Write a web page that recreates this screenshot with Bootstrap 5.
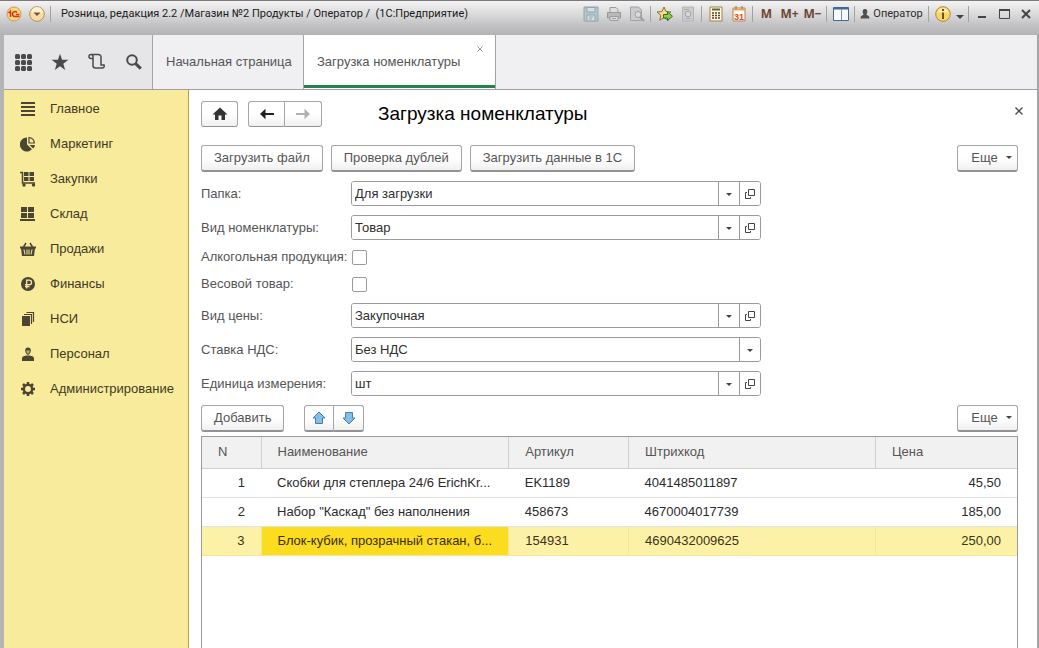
<!DOCTYPE html>
<html lang="ru">
<head>
<meta charset="utf-8">
<meta name="viewport" content="width=device-width, initial-scale=1">
<title>Загрузка номенклатуры</title>
<link href="https://cdn.jsdelivr.net/npm/bootstrap@5.3.0/dist/css/bootstrap.min.css" rel="stylesheet">
<style>
  body { font: 13px/16px "Liberation Sans", Arial, sans-serif; color: #333; background: #fff; }
  button { font: inherit; color: inherit; }
  svg { display: block; flex: none; }
  .app-frame { border-left: 4px solid #b4b4b4; border-right: 2px solid #a4a4a4; }

  /* window caption */
  .caption-bar { height: 35px; margin-left: -4px; margin-right: -2px; padding: 0 2px 8px; border-top: 1px solid #7c787b;
    background: linear-gradient(#f3f3f3, #d6d6d7 45%, #c3c3c5 70%, #b3b3b5); }
  .caption-text { font: 11px/16px Roboto, "Liberation Sans", sans-serif; color: #1a1a1a; }
  .cap-btn { width: 23px; height: 24px; padding: 0; border: 0; background: none; display: flex; align-items: center; justify-content: center; }
  .cap-sm { width: 22px; }
  .cap-arrow { width: 12px; }
  .cap-user { width: 69px; gap: 3px; font: 11px/16px Roboto, "Liberation Sans", sans-serif; color: #2c2c2c; }
  .cap-mem { font: bold 12px/16px "Open Sans", "Liberation Sans", sans-serif; color: #6d4534; }
  .cap-sep { width: 1px; height: 16px; margin: 0 2px; background: #a2a2a4; }

  /* section tabs */
  .tab-strip { background: #f0f0f2; border-bottom: 1px solid #a09ea0; height: 55px; }
  .tool-zone { width: 149px; background: #e6e6e8; border-right: 1px solid #a3a3a5; padding-left: 9px; gap: 17px; }
  .icon-btn { width: 20px; height: 20px; padding: 0; border: 0; background: none; color: #4a4a4a; display: flex; align-items: center; justify-content: center; }
  .page-tab { padding: 0 13px; color: #555; text-decoration: none; position: relative; display: flex; align-items: center; border-right: 1px solid #a3a3a5; white-space: nowrap; }
  .tab-start { width: 151px; }
  .tab-open { width: 192px; background: #fff; box-shadow: inset 0 -1px #fff, inset 0 -4px #238350, inset 1px 0 #fff, inset -1px 0 #fff; }
  .tab-close { position: absolute; right: 9px; top: 8px; width: 12px; height: 12px; padding: 0; border: 0; background: none; color: #999; display: flex; align-items: center; justify-content: center; }

  /* sections panel */
  .side-panel { width: 185px; flex: none; background: #f9eb9c; border-right: 1px solid #b3a44c; min-height: calc(100vh - 90px); padding-top: 1px; }
  .side-link { display: flex; align-items: center; height: 35px; padding-left: 16px; gap: 14px; color: #403a25; text-decoration: none; }
  .side-link svg { color: #4b4534; }

  /* form */
  .work-area { padding: 11px 8px 0 12px; background: #fff; }
  .form-body { padding-right: 11px; }
  .cmd-row { margin: 18px 0 9px; }
  .btn-form { height: 27px; border: 1px solid #a6a6a8; border-bottom: 2px solid #929294; border-radius: 3px; background: linear-gradient(#fff 50%, #f0f0f0); color: #555; line-height: 16px; padding: 0 12px; display: inline-flex; align-items: center; justify-content: center; }
  .btn-nav { height: 26px; width: 37px; padding: 0; border-bottom-width: 1px; }
  .nav-pair { margin-left: 10px; }
  .btn-move { width: 30px; padding: 0; }
  .btn-more { width: 61px; gap: 8px; padding: 0 0 0 8px; }
  .form-title { font-size: 19px; line-height: 24px; color: #000; font-weight: 400; }
  .field-set { max-width: 560px; }
  .field-row { display: flex; align-items: center; margin-bottom: 9px; }
  .check-row { margin-bottom: 11px; }
  .field-row label { width: 150px; flex: none; color: #555; white-space: nowrap; }
  .pick-box { border: 1px solid #9b9b9d; border-radius: 3px; height: 25px; display: flex; flex: 1; overflow: hidden; background: #fff; }
  .pick-box .form-select { border: 0; border-radius: 0; padding: 0 24px 0 3px; height: 23px; min-width: 0; font-size: 13px; line-height: 16px; color: #2f2f2f; background-position: right 0 center; background-size: 21px 23px;
    background-image: url("data:image/svg+xml,%3Csvg xmlns='http://www.w3.org/2000/svg' width='21' height='23'%3E%3Cpath d='M.5 0v23' stroke='%239b9b9d'/%3E%3Cpath d='M8 11h6l-3 3z' fill='%23444'/%3E%3C/svg%3E"); }
  .open-btn { width: 21px; flex: none; padding: 0; border: 0; border-left: 1px solid #9b9b9d; background: #fff; color: #444; display: flex; align-items: center; justify-content: center; }
  .check-row .form-check-input { width: 15px; height: 15px; margin: 0 0 0 1px; border: 1px solid #9b9b9d; border-radius: 2px; }

  /* item list */
  .list-frame { border: 1px solid #9b9b9d; border-bottom: 0; min-height: calc(100vh - 436px); }
  .goods { width: 100%; table-layout: fixed; border-collapse: collapse; }
  .goods th { height: 31px; padding: 0 16px; font-weight: 400; color: #555; background: #f1f1f1; border-bottom: 1px solid #cfcfcf; border-left: 1px solid #cfcfcf; }
  .goods td { height: 29px; padding: 0 16px; color: #2b2b2b; border-bottom: 1px solid #e2e2e2; white-space: nowrap; overflow: hidden; }
  .goods th:first-child, .goods .picked td:first-child { border-left: 0; }
  .goods .picked td { background: #fdf1a8; border-bottom-color: #f5e79a; border-left: 1px solid #f6e697; color: #3b3311; }
  .goods .picked td.cell-on { background: #fbdc1e; color: #3b2c05; }
  .w-n { width: 59px; } .w-name { width: 30.4%; } .w-art { width: 14.7%; } .w-bar { width: 30.3%; }
</style>
</head>
<body>
<div class="app-frame">
  <header class="caption-bar d-flex align-items-center">
    <button class="cap-btn" type="button" aria-label="1С">
      <svg width="16" height="16" viewBox="0 0 16 16"><circle cx="8" cy="8" r="7" fill="#fbd77c" stroke="#c99a5a"/><path d="M2.500 7 4.500 5.200V11M11 6.600C9.600 4.600 6.400 5.600 6.400 8.100c0 1.600 1 2.400 2.400 2.400h4.700M10 8.600h3.500" fill="none" stroke="#d8301c" stroke-width="1.500"/></svg>
    </button>
    <button class="cap-btn" type="button" aria-label="Меню">
      <svg width="16" height="16" viewBox="0 0 16 16"><circle cx="8" cy="8" r="7.300" fill="#f8dba5" stroke="#bb8c56"/><path d="M2 7a6 6 0 0 1 12 0z" fill="#fdf0d4"/><path d="M4.500 6.500h7L8 10z" fill="#7a5335"/></svg>
    </button>
    <span class="cap-sep"></span>
    <span class="caption-text ms-2 text-nowrap">Розница, редакция 2.2 /Магазин №2 Продукты / Оператор /&nbsp; (1С:Предприятие)</span>
    <div class="d-flex align-items-center ms-auto">
      <button class="cap-btn" type="button" aria-label="Сохранить"><svg width="16" height="16" viewBox="0 0 16 16"><path d="M1 1h14v14H1z" fill="#b4c6cc" stroke="#8fa6ae"/><path d="M4 1.500h8V6H4zM4 9h8v6H4z" fill="#d5dfe2" stroke="#8fa6ae"/><path d="M6 11h4M6 13h3" stroke="#8fa6ae"/></svg></button>
      <button class="cap-btn" type="button" aria-label="Печать"><svg width="16" height="16" viewBox="0 0 16 16"><path d="M1.500 6.500h13v5.500h-13z" fill="#b9b9b9" stroke="#969696"/><path d="M4 6.500V1.500h6l2 2v3zM4 10.500h8v4H4z" fill="#dedede" stroke="#9c9c9c"/><path d="M6 12.500h4" stroke="#999"/></svg></button>
      <button class="cap-btn" type="button" aria-label="Просмотр"><svg width="16" height="16" viewBox="0 0 16 16"><path d="M1.500 1h8l3 3v10.500h-11z" fill="#c9cbcc" stroke="#a0a2a3"/><circle cx="9" cy="8.500" r="3" fill="#dadcdd" stroke="#9a9c9d"/><path d="m11 11 4 4" stroke="#9a9c9d" stroke-width="2"/></svg></button>
      <span class="cap-sep"></span>
      <button class="cap-btn" type="button" aria-label="В избранное"><svg width="18" height="16" viewBox="0 0 18 16"><path d="m8 1 2 4.500 5 .5-3.800 3.200 1 5L8 11.600 3.800 14.200l1-5L1 6l5-.5z" fill="#f7dc8c" stroke="#8b7038"/><path d="M7.500 8.500h4V6l5 4.200-5 4.300v-2.500h-4z" fill="#8bd04a" stroke="#356b24"/></svg></button>
      <button class="cap-btn" type="button" aria-label="Избранное"><svg width="14" height="16" viewBox="0 0 14 16"><path d="M1.500 1h11v14h-11z" fill="#cbcccd" stroke="#b3b4b5"/><circle cx="7" cy="8" r="2.800" fill="#d8d8d8" stroke="#a2a3a4"/><path d="M3 3.500h5M5 12.500h5" stroke="#acadae"/></svg></button>
      <span class="cap-sep"></span>
      <button class="cap-btn" type="button" aria-label="Калькулятор"><svg width="14" height="16" viewBox="0 0 14 16"><path d="M1 1h12v14H1z" fill="#fff8dc" stroke="#a97d4e"/><path d="M3 3.500h8" stroke="#4f7332" stroke-width="2"/><path d="M3 7h8M3 9.500h8M3 12h8" stroke="#54432e" stroke-width="1.500" stroke-dasharray="2 1"/></svg></button>
      <button class="cap-btn" type="button" aria-label="Календарь"><svg width="14" height="16" viewBox="0 0 14 16"><path d="M1 2h12v13H1z" fill="#fffaf0" stroke="#b98251"/><path d="M1 3.500h12" stroke="#e6a567" stroke-width="2"/><path d="M4 0v3M10 0v3" stroke="#98714d"/><text x="7" y="13.500" text-anchor="middle" font-family="Liberation Sans" font-size="9" font-weight="bold" fill="#d2512a">31</text></svg></button>
      <span class="cap-sep"></span>
      <button class="cap-btn cap-mem" type="button">M</button>
      <button class="cap-btn cap-mem" type="button">M+</button>
      <button class="cap-btn cap-mem" type="button">M−</button>
      <span class="cap-sep"></span>
      <button class="cap-btn" type="button" aria-label="Панели"><svg width="16" height="14" viewBox="0 0 16 14"><path d="M.5.5h15v13H.5z" fill="#f7fbff" stroke="#43698b"/><path d="M.5 1.500h15" stroke="#43698b" stroke-width="2"/><path d="M8.500 2v11" stroke="#7894ab"/></svg></button>
      <span class="cap-sep"></span>
      <button class="cap-btn cap-user" type="button"><svg width="10" height="10" viewBox="0 0 10 10"><path d="M5 0c2 0 2.500 1.500 2.300 3C7.100 4.500 6.500 5 6.300 5.600c.5.900 3.200.9 3.200 3.900h-9C.5 6.500 3.200 6.500 3.700 5.600 3.500 5 2.900 4.500 2.700 3 2.500 1.500 3 0 5 0z" fill="#4e4e50"/></svg>Оператор</button>
      <span class="cap-sep"></span>
      <button class="cap-btn" type="button" aria-label="Справка"><svg width="16" height="16" viewBox="0 0 16 16"><circle cx="8" cy="8" r="7.300" fill="#f8d668" stroke="#b58a33"/><path d="M2.500 6.500a5.600 5 0 0 1 11 0z" fill="#fdefb9"/><path d="M8 3v2M8 6.500V13" stroke="#6b5420" stroke-width="2"/></svg></button>
      <button class="cap-btn cap-arrow" type="button" aria-label="Еще"><svg width="8" height="12" viewBox="0 0 8 12"><path d="M0 7h8L4 11z" fill="#444"/></svg></button>
      <span class="cap-sep"></span>
      <button class="cap-btn cap-sm" type="button" aria-label="Свернуть"><svg width="8" height="12" viewBox="0 0 8 12"><path d="M0 9h8" stroke="#444" stroke-width="2"/></svg></button>
      <button class="cap-btn cap-sm" type="button" aria-label="Развернуть"><svg width="11" height="10" viewBox="0 0 11 10"><path d="M.5 1h10v8.500H.5z" fill="none" stroke="#444"/><path d="M0 1h11" stroke="#444" stroke-width="2"/></svg></button>
      <button class="cap-btn cap-sm" type="button" aria-label="Закрыть"><svg width="10" height="10" viewBox="0 0 10 10"><path d="m1 1 8 8M9 1 1 9" stroke="#444" stroke-width="2"/></svg></button>
    </div>
  </header>

  <nav class="tab-strip d-flex">
    <div class="tool-zone d-flex align-items-center">
      <button class="icon-btn" type="button" aria-label="Все функции"><svg width="17" height="17" viewBox="0 0 17 17" fill="currentColor"><rect x="0" y="0" width="5" height="5" rx="1.500"/><rect x="6" y="0" width="5" height="5" rx="1.500"/><rect x="12" y="0" width="5" height="5" rx="1.500"/><rect x="0" y="6" width="5" height="5" rx="1.500"/><rect x="6" y="6" width="5" height="5" rx="1.500"/><rect x="12" y="6" width="5" height="5" rx="1.500"/><rect x="0" y="12" width="5" height="5" rx="1.500"/><rect x="6" y="12" width="5" height="5" rx="1.500"/><rect x="12" y="12" width="5" height="5" rx="1.500"/></svg></button>
      <button class="icon-btn" type="button" aria-label="Избранное"><svg width="18" height="18" viewBox="0 0 18 18"><path d="m9 .8 2.100 6h6.300l-5.100 3.900 1.900 6.200L9 13.200l-5.200 3.700 1.900-6.200L.6 6.800h6.300z" fill="currentColor"/></svg></button>
      <button class="icon-btn" type="button" aria-label="История"><svg width="18" height="18" viewBox="0 0 18 18" fill="none" stroke="currentColor" stroke-width="1.500"><path d="M4.500 5.500H3a2 2 0 1 1 2-2v9a2.500 2.500 0 0 0 2.500 2.500H14.500a2 2 0 0 0 1.500-3H13V4a2.500 2.500 0 0 0-2.500-2.500H3"/></svg></button>
      <button class="icon-btn" type="button" aria-label="Поиск"><svg width="18" height="18" viewBox="0 0 18 18" fill="none" stroke="currentColor"><circle cx="7" cy="7" r="4.800" stroke-width="2"/><path d="m10.600 10.600 5.200 5" stroke-width="3"/></svg></button>
    </div>
    <a class="page-tab tab-start" href="#">Начальная страница</a>
    <div class="page-tab tab-open"><a class="text-reset text-decoration-none" href="#">Загрузка номенклатуры</a>
      <button class="tab-close" type="button" aria-label="Закрыть вкладку"><svg width="6" height="6" viewBox="0 0 6 6"><path d="m.5.5 5 5M5.500.5l-5 5" stroke="currentColor"/></svg></button>
    </div>
  </nav>

  <div class="d-flex">
    <aside class="side-panel">
      <a class="side-link" href="#"><svg width="16" height="16" viewBox="0 0 16 16"><path d="M1 2h14M1 6h14M1 10h14M1 14h14" stroke="currentColor" stroke-width="2"/></svg>Главное</a>
      <a class="side-link" href="#"><svg width="16" height="16" viewBox="0 0 16 16"><path d="M7 1.500V8.500l5 4.800A7 7 0 1 1 7 1.500z" fill="currentColor"/><path d="M9 1.500A5.500 5.500 0 0 1 14.300 7H9z" fill="none" stroke="currentColor" stroke-width="1.200"/><path d="M9.500 9H15a6 6 0 0 1-1.800 3.600z" fill="currentColor"/></svg>Маркетинг</a>
      <a class="side-link" href="#"><svg width="16" height="16" viewBox="0 0 16 16"><path d="M0 1.500h2.500V12H15" fill="none" stroke="currentColor" stroke-width="1.500"/><path d="M4 1h4.500v4H4zM9.500 1H14v4H9.500zM4 6h4.500v4H4zM9.500 6H14v4H9.500z" fill="currentColor"/><circle cx="4" cy="14" r="1.700" fill="currentColor"/><circle cx="13.500" cy="14" r="1.700" fill="currentColor"/></svg>Закупки</a>
      <a class="side-link" href="#"><svg width="16" height="16" viewBox="0 0 16 16"><path d="M1 1h6v5H1zM8 1h6v5H8zM1 7h6v5H1zM8 7h6v5H8zM0 13h15v2H0z" fill="currentColor"/></svg>Склад</a>
      <a class="side-link" href="#"><svg width="16" height="16" viewBox="0 0 16 16"><path d="M0 5.500h16v2H15L14 15H2L1 7.500H0z" fill="currentColor"/><path d="M3.500 6 6 2M12.500 6 10 2" stroke="currentColor" stroke-width="1.500"/><path d="m4 8.500 1 5M12 8.500l-1 5M7 8.500v5M9 8.500v5" stroke="#f9eb9c"/></svg>Продажи</a>
      <a class="side-link" href="#"><svg width="16" height="16" viewBox="0 0 16 16"><circle cx="8" cy="8" r="7" fill="currentColor"/><path d="M6.700 12.500V4.200h2.600a2.200 2.200 0 0 1 0 4.500H5M5 10.500h4.500" fill="none" stroke="#f9eb9c" stroke-width="1.300"/></svg>Финансы</a>
      <a class="side-link" href="#"><svg width="16" height="16" viewBox="0 0 16 16"><path d="M2 5h8v10H2z" fill="currentColor"/><path d="M4 3.500h7.500V13M6.500 1.500h7V11" fill="none" stroke="currentColor" stroke-width="1.200"/></svg>НСИ</a>
      <a class="side-link" href="#"><svg width="16" height="16" viewBox="0 0 16 16"><path d="M2 15v-2.500C2 10 5 10 6.500 9.500h3C11 10 14 10 14 12.500V15z" fill="currentColor"/><path d="M8 1.500c2 0 2.800 1.200 2.800 3S9.500 8.800 8 8.800 5.200 6.300 5.200 4.500 6 1.500 8 1.500z" fill="currentColor"/><path d="M6.200 4.500c1 .3 2 0 2.500-.5.300.4.700.5 1.100.5C9.700 6.500 9 7.700 8 7.700S6.300 6.500 6.200 4.500z" fill="#b0a673"/></svg>Персонал</a>
      <a class="side-link" href="#"><svg width="16" height="16" viewBox="0 0 16 16" fill="none" stroke="currentColor"><circle cx="8" cy="8" r="4.200" stroke-width="2.500"/><path d="M8 1v2.500M8 12.500V15M1 8h2.500M12.500 8H15M3 3l1.800 1.800M11.200 11.200 13 13M13 3l-1.800 1.800M4.800 11.200 3 13" stroke-width="2.600"/></svg>Администрирование</a>
    </aside>

    <main class="work-area flex-grow-1">
      <div class="d-flex align-items-center">
        <button class="btn-form btn-nav" type="button" aria-label="Домой"><svg width="16" height="14" viewBox="0 0 16 14"><path d="M8 .5.500 7.500H3V13h3.500V8.500h3V13H13V7.500h2.500z" fill="#333"/></svg></button>
        <div class="btn-group nav-pair" role="group" aria-label="Навигация">
          <button class="btn-form btn-nav rounded-end-0" type="button" aria-label="Назад"><svg width="14" height="12" viewBox="0 0 14 12"><path d="M0 6 5.500.800V5H14v2H5.500v4.200z" fill="#222"/></svg></button>
          <button class="btn-form btn-nav rounded-start-0 border-start-0" type="button" aria-label="Вперед"><svg width="14" height="12" viewBox="0 0 14 12"><path d="M14 6 8.500.800V5H0v2h8.500v4.200z" fill="#b0b0b0"/></svg></button>
        </div>
        <h1 class="form-title mb-0 ms-5 ps-2">Загрузка номенклатуры</h1>
        <button class="icon-btn ms-auto align-self-start" type="button" aria-label="Закрыть"><svg width="8" height="8" viewBox="0 0 8 8"><path d="m.5.5 7 7M7.500.5l-7 7" stroke="currentColor" stroke-width="1.300"/></svg></button>
      </div>

      <div class="form-body">
        <div class="cmd-row d-flex gap-2">
          <button class="btn-form" type="button">Загрузить файл</button>
          <button class="btn-form" type="button">Проверка дублей</button>
          <button class="btn-form" type="button">Загрузить данные в 1С</button>
          <button class="btn-form btn-more ms-auto" type="button">Еще<svg width="6" height="4" viewBox="0 0 6 4"><path d="M0 0h6L3 3z" fill="#444"/></svg></button>
        </div>

        <form class="field-set">
          <div class="field-row"><label for="folder">Папка:</label>
            <div class="pick-box"><select class="form-select" id="folder"><option>Для загрузки</option></select>
            <button class="open-btn" type="button" aria-label="Открыть"><svg width="10" height="10" viewBox="0 0 10 10" fill="none" stroke="currentColor"><path d="M3.500.5h6v6h-6zM2 3.500H.5v6h5V8"/></svg></button></div></div>
          <div class="field-row"><label for="kind">Вид номенклатуры:</label>
            <div class="pick-box"><select class="form-select" id="kind"><option>Товар</option></select>
            <button class="open-btn" type="button" aria-label="Открыть"><svg width="10" height="10" viewBox="0 0 10 10" fill="none" stroke="currentColor"><path d="M3.500.5h6v6h-6zM2 3.500H.5v6h5V8"/></svg></button></div></div>
          <div class="field-row check-row"><label for="alco">Алкогольная продукция:</label><input class="form-check-input" type="checkbox" id="alco"></div>
          <div class="field-row check-row"><label for="weight">Весовой товар:</label><input class="form-check-input" type="checkbox" id="weight"></div>
          <div class="field-row"><label for="price">Вид цены:</label>
            <div class="pick-box"><select class="form-select" id="price"><option>Закупочная</option></select>
            <button class="open-btn" type="button" aria-label="Открыть"><svg width="10" height="10" viewBox="0 0 10 10" fill="none" stroke="currentColor"><path d="M3.500.5h6v6h-6zM2 3.500H.5v6h5V8"/></svg></button></div></div>
          <div class="field-row"><label for="vat">Ставка НДС:</label>
            <div class="pick-box"><select class="form-select" id="vat"><option>Без НДС</option></select></div></div>
          <div class="field-row"><label for="unit">Единица измерения:</label>
            <div class="pick-box"><select class="form-select" id="unit"><option>шт</option></select>
            <button class="open-btn" type="button" aria-label="Открыть"><svg width="10" height="10" viewBox="0 0 10 10" fill="none" stroke="currentColor"><path d="M3.500.5h6v6h-6zM2 3.500H.5v6h5V8"/></svg></button></div></div>
        </form>

        <div class="d-flex mb-1">
          <button class="btn-form" type="button">Добавить</button>
          <div class="btn-group ms-3 ps-1" role="group" aria-label="Порядок строк">
            <button class="btn-form btn-move rounded-end-0" type="button" aria-label="Выше"><svg width="14" height="14" viewBox="0 0 14 14"><path d="M7 1 1 7h2.500v5.500h7V7H13z" fill="#7fbfe9" stroke="#4a7ea8"/></svg></button>
            <button class="btn-form btn-move rounded-start-0 border-start-0" type="button" aria-label="Ниже"><svg width="14" height="14" viewBox="0 0 14 14"><path d="m7 13 6-6h-2.500V1.500h-7V7H1z" fill="#7fbfe9" stroke="#4a7ea8"/></svg></button>
          </div>
          <button class="btn-form btn-more ms-auto" type="button">Еще<svg width="6" height="4" viewBox="0 0 6 4"><path d="M0 0h6L3 3z" fill="#444"/></svg></button>
        </div>

        <div class="list-frame">
          <table class="goods">
            <thead><tr><th class="w-n">N</th><th class="w-name">Наименование</th><th class="w-art">Артикул</th><th class="w-bar">Штрихкод</th><th>Цена</th></tr></thead>
            <tbody>
              <tr><td class="text-end">1</td><td>Скобки для степлера 24/6 ErichKr...</td><td>EK1189</td><td>4041485011897</td><td class="text-end">45,50</td></tr>
              <tr><td class="text-end">2</td><td>Набор "Каскад" без наполнения</td><td>458673</td><td>4670004017739</td><td class="text-end">185,00</td></tr>
              <tr class="picked"><td class="text-end">3</td><td class="cell-on">Блок-кубик, прозрачный стакан, б...</td><td>154931</td><td>4690432009625</td><td class="text-end">250,00</td></tr>
            </tbody>
          </table>
        </div>
      </div>
    </main>
  </div>
</div>
<script src="https://cdn.jsdelivr.net/npm/bootstrap@5.3.0/dist/js/bootstrap.bundle.min.js"></script>
</body>
</html>
